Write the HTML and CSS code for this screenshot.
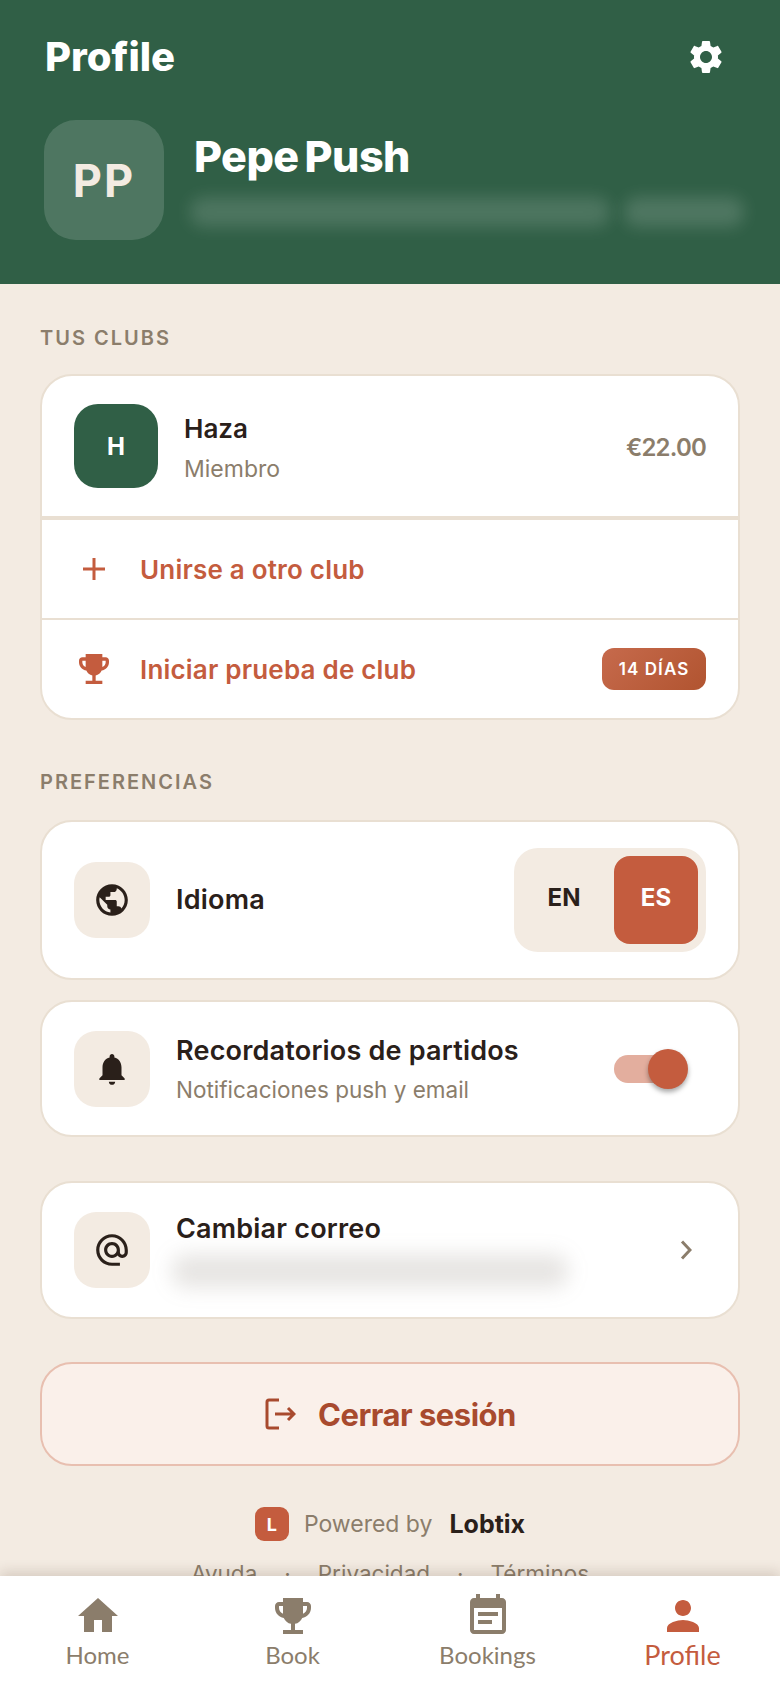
FILE: index.html
```html
<!DOCTYPE html>
<html lang="es">
<head>
<meta charset="UTF-8">
<meta name="viewport" content="width=device-width">
<title>Profile</title>
<link rel="stylesheet" href="styles.css">
</head>
<body>
<div class="app">
    <div class="scroll">
        <header class="top">
            <div class="top-bar">
                <h1>Profile</h1>
                <svg class="gear" viewBox="0 0 24 24"><path d="M19.14 12.94c.04-.3.06-.61.06-.94 0-.32-.02-.64-.07-.94l2.03-1.58c.18-.14.23-.41.12-.61l-1.92-3.32c-.12-.22-.37-.29-.59-.22l-2.39.96c-.5-.38-1.03-.7-1.62-.94l-.36-2.54c-.04-.24-.24-.41-.48-.41h-3.84c-.24 0-.43.17-.47.41l-.36 2.54c-.59.24-1.13.57-1.62.94l-2.39-.96c-.22-.08-.47 0-.59.22L2.74 8.87c-.12.21-.08.47.12.61l2.03 1.58c-.05.3-.09.63-.09.94s.02.64.07.94l-2.03 1.58c-.18.14-.23.41-.12.61l1.92 3.32c.12.22.37.29.59.22l2.39-.96c.5.38 1.03.7 1.62.94l.36 2.54c.05.24.24.41.48.41h3.84c.24 0 .44-.17.47-.41l.36-2.54c.59-.24 1.13-.56 1.62-.94l2.39.96c.22.08.47 0 .59-.22l1.92-3.32c.12-.22.07-.47-.12-.61l-2.01-1.58zM12 15.6c-1.98 0-3.6-1.62-3.6-3.6s1.62-3.6 3.6-3.6 3.6 1.62 3.6 3.6-1.62 3.6-3.6 3.6z"/></svg>
            </div>
            <div class="who">
                <div class="avatar">PP</div>
                <div class="who-text">
                    <div class="who-name">Pepe Push</div>
                    <div class="smudge-row">
                        <div class="smudge smudge-a"></div>
                        <div class="smudge smudge-b"></div>
                    </div>
                </div>
            </div>
        </header>

        <main class="content">
            <div class="label">TUS CLUBS</div>
            <section class="card">
                <div class="club">
                    <div class="club-tile">H</div>
                    <div class="club-text">
                        <div class="club-name">Haza</div>
                        <div class="club-role">Miembro</div>
                    </div>
                    <div class="club-price">€22.00</div>
                </div>
                <div class="action action-thick">
                    <div class="action-icon">
                        <svg class="plus" viewBox="0 0 24 24"><path d="M12 1v22M1 12h22"/></svg>
                    </div>
                    <span class="action-text">Unirse a otro club</span>
                </div>
                <div class="action action-thin">
                    <div class="action-icon">
                        <svg class="trophy" viewBox="0 0 24 24"><path d="M19 5h-2V3H7v2H5c-1.1 0-2 .9-2 2v1c0 2.55 1.92 4.63 4.39 4.94.63 1.5 1.98 2.63 3.61 2.96V19H7v2h10v-2h-4v-3.1c1.63-.33 2.98-1.46 3.61-2.96C19.08 12.63 21 10.55 21 8V7c0-1.1-.9-2-2-2zM5 8V7h2v3.82C5.84 10.4 5 9.3 5 8zm14 0c0 1.3-.84 2.4-2 2.82V7h2v1z"/></svg>
                    </div>
                    <span class="action-text">Iniciar prueba de club</span>
                    <span class="badge">14 DÍAS</span>
                </div>
            </section>

            <div class="label label-two">PREFERENCIAS</div>
            <section class="card row row-lang">
                <div class="tile">
                    <svg class="tile-icon" viewBox="0 0 24 24"><path d="M12 2C6.48 2 2 6.48 2 12s4.48 10 10 10 10-4.48 10-10S17.52 2 12 2zm-1 17.93c-3.95-.49-7-3.85-7-7.93 0-.62.08-1.21.21-1.79L9 15v1c0 1.1.9 2 2 2v1.93zm6.9-2.54c-.26-.81-1-1.39-1.9-1.39h-1v-3c0-.55-.45-1-1-1H8v-2h2c.55 0 1-.45 1-1V7h2c1.1 0 2-.9 2-2v-.41c2.93 1.19 5 4.06 5 7.41 0 2.08-.8 3.97-2.1 5.39z"/></svg>
                </div>
                <div class="row-text"><div class="row-title">Idioma</div></div>
                <div class="lang">
                    <div class="lang-btn">EN</div>
                    <div class="lang-btn lang-on">ES</div>
                </div>
            </section>

            <section class="card row row-remind">
                <div class="tile">
                    <svg class="tile-icon" viewBox="0 0 24 24"><path d="M12 22c1.1 0 2-.9 2-2h-4c0 1.1.89 2 2 2zm6-6v-5c0-3.07-1.64-5.64-4.5-6.32V4c0-.83-.67-1.5-1.5-1.5s-1.5.67-1.5 1.5v.68C7.63 5.36 6 7.92 6 11v5l-2 2v1h16v-1l-2-2z"/></svg>
                </div>
                <div class="row-text">
                    <div class="row-title">Recordatorios de partidos</div>
                    <div class="row-sub">Notificaciones push y email</div>
                </div>
                <div class="switch"><div class="switch-knob"></div></div>
            </section>

            <section class="card row row-mail">
                <div class="tile">
                    <svg class="tile-icon" viewBox="0 0 24 24"><path d="M12 2C6.48 2 2 6.48 2 12s4.48 10 10 10h5v-2h-5c-4.34 0-8-3.66-8-8s3.66-8 8-8 8 3.66 8 8v1.43c0 .79-.71 1.57-1.5 1.57s-1.5-.78-1.5-1.57V12c0-2.76-2.24-5-5-5s-5 2.24-5 5 2.24 5 5 5c1.38 0 2.64-.56 3.54-1.47.65.89 1.77 1.47 2.96 1.47 1.97 0 3.5-1.6 3.5-3.57V12c0-5.52-4.48-10-10-10zm0 13c-1.66 0-3-1.34-3-3s1.34-3 3-3 3 1.34 3 3-1.34 3-3 3z"/></svg>
                </div>
                <div class="row-text">
                    <div class="row-title">Cambiar correo</div>
                    <div class="smudge smudge-mail"></div>
                </div>
                <svg class="chevron" viewBox="0 0 12 20"><path d="M2 1.5l8 8.5-8 8.5"/></svg>
            </section>

            <div class="logout">
                <svg class="logout-icon" viewBox="0 0 32 32"><path d="M15 2H5a2 2 0 0 0-2 2v24a2 2 0 0 0 2 2h10M11 16h19M24 10l6 6-6 6"/></svg>
                <span>Cerrar sesión</span>
            </div>

            <div class="powered">
                <div class="powered-logo">L</div>
                <span class="powered-by">Powered by</span>
                <span class="powered-name">Lobtix</span>
            </div>
            <div class="links">
                <span>Ayuda</span><span>·</span><span>Privacidad</span><span>·</span><span>Términos</span>
            </div>
        </main>
    </div>

    <nav class="tabs">
        <div class="tab">
            <svg viewBox="0 0 24 24"><path d="M10 20v-6h4v6h5v-8h3L12 3 2 12h3v8z"/></svg>
            <span>Home</span>
        </div>
        <div class="tab">
            <svg viewBox="0 0 24 24"><path d="M19 5h-2V3H7v2H5c-1.1 0-2 .9-2 2v1c0 2.55 1.92 4.63 4.39 4.94.63 1.5 1.98 2.63 3.61 2.96V19H7v2h10v-2h-4v-3.1c1.63-.33 2.98-1.46 3.61-2.96C19.08 12.63 21 10.55 21 8V7c0-1.1-.9-2-2-2zM5 8V7h2v3.82C5.84 10.4 5 9.3 5 8zm14 0c0 1.3-.84 2.4-2 2.82V7h2v1z"/></svg>
            <span>Book</span>
        </div>
        <div class="tab">
            <svg viewBox="0 0 24 24"><path d="M17 10H7v2h10v-2zm2-7h-1V1h-2v2H8V1H6v2H5c-1.11 0-1.99.9-1.99 2L3 19c0 1.1.89 2 2 2h14c1.1 0 2-.9 2-2V5c0-1.1-.9-2-2-2zm0 16H5V8h14v11zm-5-5H7v2h7v-2z"/></svg>
            <span>Bookings</span>
        </div>
        <div class="tab tab-on">
            <svg viewBox="0 0 24 24"><path d="M12 12c2.21 0 4-1.79 4-4s-1.79-4-4-4-4 1.79-4 4 1.79 4 4 4zm0 2c-2.67 0-8 1.34-8 4v2h16v-2c0-2.66-5.33-4-8-4z"/></svg>
            <span>Profile</span>
        </div>
    </nav>
</div>
</body>
</html>
```

FILE: styles.css
```css
:root{--green:#305f46;--sand:#f3ebe2;--line:#e9dfd2;--rust:#c45c3e;--ink:#2a201a;--muted:#8b7d6b}
*{margin:0;padding:0;box-sizing:border-box}
body{background:var(--sand);color:var(--ink);font-family:Inter,"Noto Sans",sans-serif;overflow:hidden}

.app{height:1688px;display:flex;flex-direction:column}
.scroll{flex:1;min-height:0;overflow:hidden}

/* Header */
.top{height:284px;background:var(--green);padding:32px 44px 0 44px;color:#fff}
.top-bar{height:48px;display:flex;align-items:center;justify-content:space-between;margin-bottom:40px}
.top-bar h1{font-size:40px;font-weight:800;margin-left:1px}
.gear{width:40px;height:40px;fill:#fff;margin:2px 10px 0 0}
.who{display:flex;gap:30px}
.avatar{flex:none;width:120px;height:120px;border-radius:32px;background:rgba(255,255,255,.15);display:flex;align-items:center;justify-content:center;font-size:45px;font-weight:700;letter-spacing:2px;color:var(--sand)}
.who-text{flex:1;min-width:0;padding-top:13px}
.who-name{font-size:43px;font-weight:800;line-height:46px;letter-spacing:-.5px;word-spacing:-3px}
.smudge-row{display:flex;gap:14px;margin:18px 0 0 -4px}
.smudge{height:30px;border-radius:14px;filter:blur(8px)}
.smudge-a{flex:none;width:420px;background:rgba(255,255,255,.14)}
.smudge-b{flex:none;width:120px;background:rgba(255,255,255,.15)}

/* Sections */
.content{padding:42px 40px 0}
.label{font-size:20px;line-height:24px;font-weight:600;letter-spacing:2px;color:var(--muted);margin-bottom:24px}
.label-two{margin:50px 0 26px}
.card{background:#fff;border:2px solid var(--line);border-radius:32px}

/* Clubs */
.club{height:140px;display:flex;align-items:center;padding:0 32px}
.club-tile{width:84px;height:84px;border-radius:24px;background:var(--green);color:#fff;display:flex;align-items:center;justify-content:center;font-size:24px;font-weight:700}
.club-text{flex:1;margin-left:26px;padding-top:3px}
.club-name{font-size:26px;line-height:34px;font-weight:600}
.club-role{font-size:23px;line-height:28px;color:var(--muted);margin-top:9px}
.club-price{font-size:24px;font-weight:600;letter-spacing:-.8px;color:var(--muted);padding-top:2px}
.action{display:flex;align-items:center;padding:0 32px;gap:26px;border-top:2px solid var(--line)}
.action-thick{height:102px;border-top-width:4px}
.action-thin{height:100px}
.action-icon{width:40px;display:flex;justify-content:center}
.plus{width:24px;height:24px;fill:none;stroke:var(--rust);stroke-width:3}
.trophy{width:42px;height:42px;fill:var(--rust)}
.action-text{flex:1;font-size:26px;font-weight:600;letter-spacing:.2px;color:var(--rust)}
.badge{width:104px;height:42px;border-radius:12px;background:linear-gradient(135deg,#c66a4c,#b15430);color:#fff;font-size:17px;font-weight:600;letter-spacing:1.1px;display:flex;align-items:center;justify-content:center}

/* Preference rows */
.row{display:flex;align-items:center;padding:0 32px;gap:26px}
.row-lang{height:160px}
.row-remind{height:137px;margin-top:20px}
.row-mail{height:138px;margin-top:44px}
.tile{width:76px;height:76px;border-radius:22px;background:var(--sand);display:flex;align-items:center;justify-content:center;flex:none}
.tile-icon{width:38px;height:38px;fill:var(--ink)}
.row-text{flex:1}
.row-title{font-size:27px;line-height:34px;font-weight:600;letter-spacing:.2px}
.row-sub{font-size:22.5px;line-height:28px;color:var(--muted);margin-top:8px}
.lang{width:192px;height:104px;border-radius:24px;background:var(--sand);padding:8px;display:flex;gap:8px}
.lang-btn{flex:1;border-radius:16px;display:flex;align-items:center;justify-content:center;padding-bottom:6px;font-size:24px;font-weight:700}
.lang-on{background:var(--rust);color:#fff}
.switch{width:68px;height:28px;border-radius:14px;background:#e3ae9e;position:relative;margin-right:24px}
.switch-knob{position:absolute;right:-6px;top:-6px;width:40px;height:40px;border-radius:50%;background:var(--rust);box-shadow:0 3px 5px rgba(0,0,0,.35)}
.smudge-mail{width:396px;height:34px;margin:8px 0 0 -4px;background:rgba(110,100,90,.17);filter:blur(10px)}
.chevron{width:12px;height:20px;fill:none;stroke:var(--muted);stroke-width:3;margin-right:14px}

/* Logout */
.logout{height:104px;margin-top:43px;background:#faf0ea;border:2px solid #e8bfb0;border-radius:32px;display:flex;align-items:center;justify-content:center;gap:22px;color:#a84a2e;font-size:31px;font-weight:700;letter-spacing:-.5px}
.logout-icon{width:32px;height:32px;fill:none;stroke:#a84a2e;stroke-width:3}

/* Footer */
.powered{display:flex;align-items:center;justify-content:center;margin-top:41px}
.powered-logo{width:34px;height:34px;border-radius:9px;background:var(--rust);color:#fff;font-size:18px;font-weight:700;display:flex;align-items:center;justify-content:center}
.powered-by{font-size:23px;color:var(--muted);margin:0 17px 0 15px}
.powered-name{font-size:25px;font-weight:700}
.links{display:flex;justify-content:center;gap:27px;margin-top:19px;font-size:22.5px;color:var(--muted)}

/* Bottom tabs */
.tabs{height:112px;background:#fff;display:flex;box-shadow:0 -4px 12px rgba(60,40,20,.16);position:relative}
.tab{flex:1;display:flex;flex-direction:column;align-items:center;padding-top:16px;color:var(--muted);font-family:Lato,sans-serif;font-size:24px;line-height:30px}
.tab svg{width:48px;height:48px;fill:var(--muted)}
.tab-on{color:var(--rust);font-size:27px}
.tab-on svg{fill:var(--rust)}
```
